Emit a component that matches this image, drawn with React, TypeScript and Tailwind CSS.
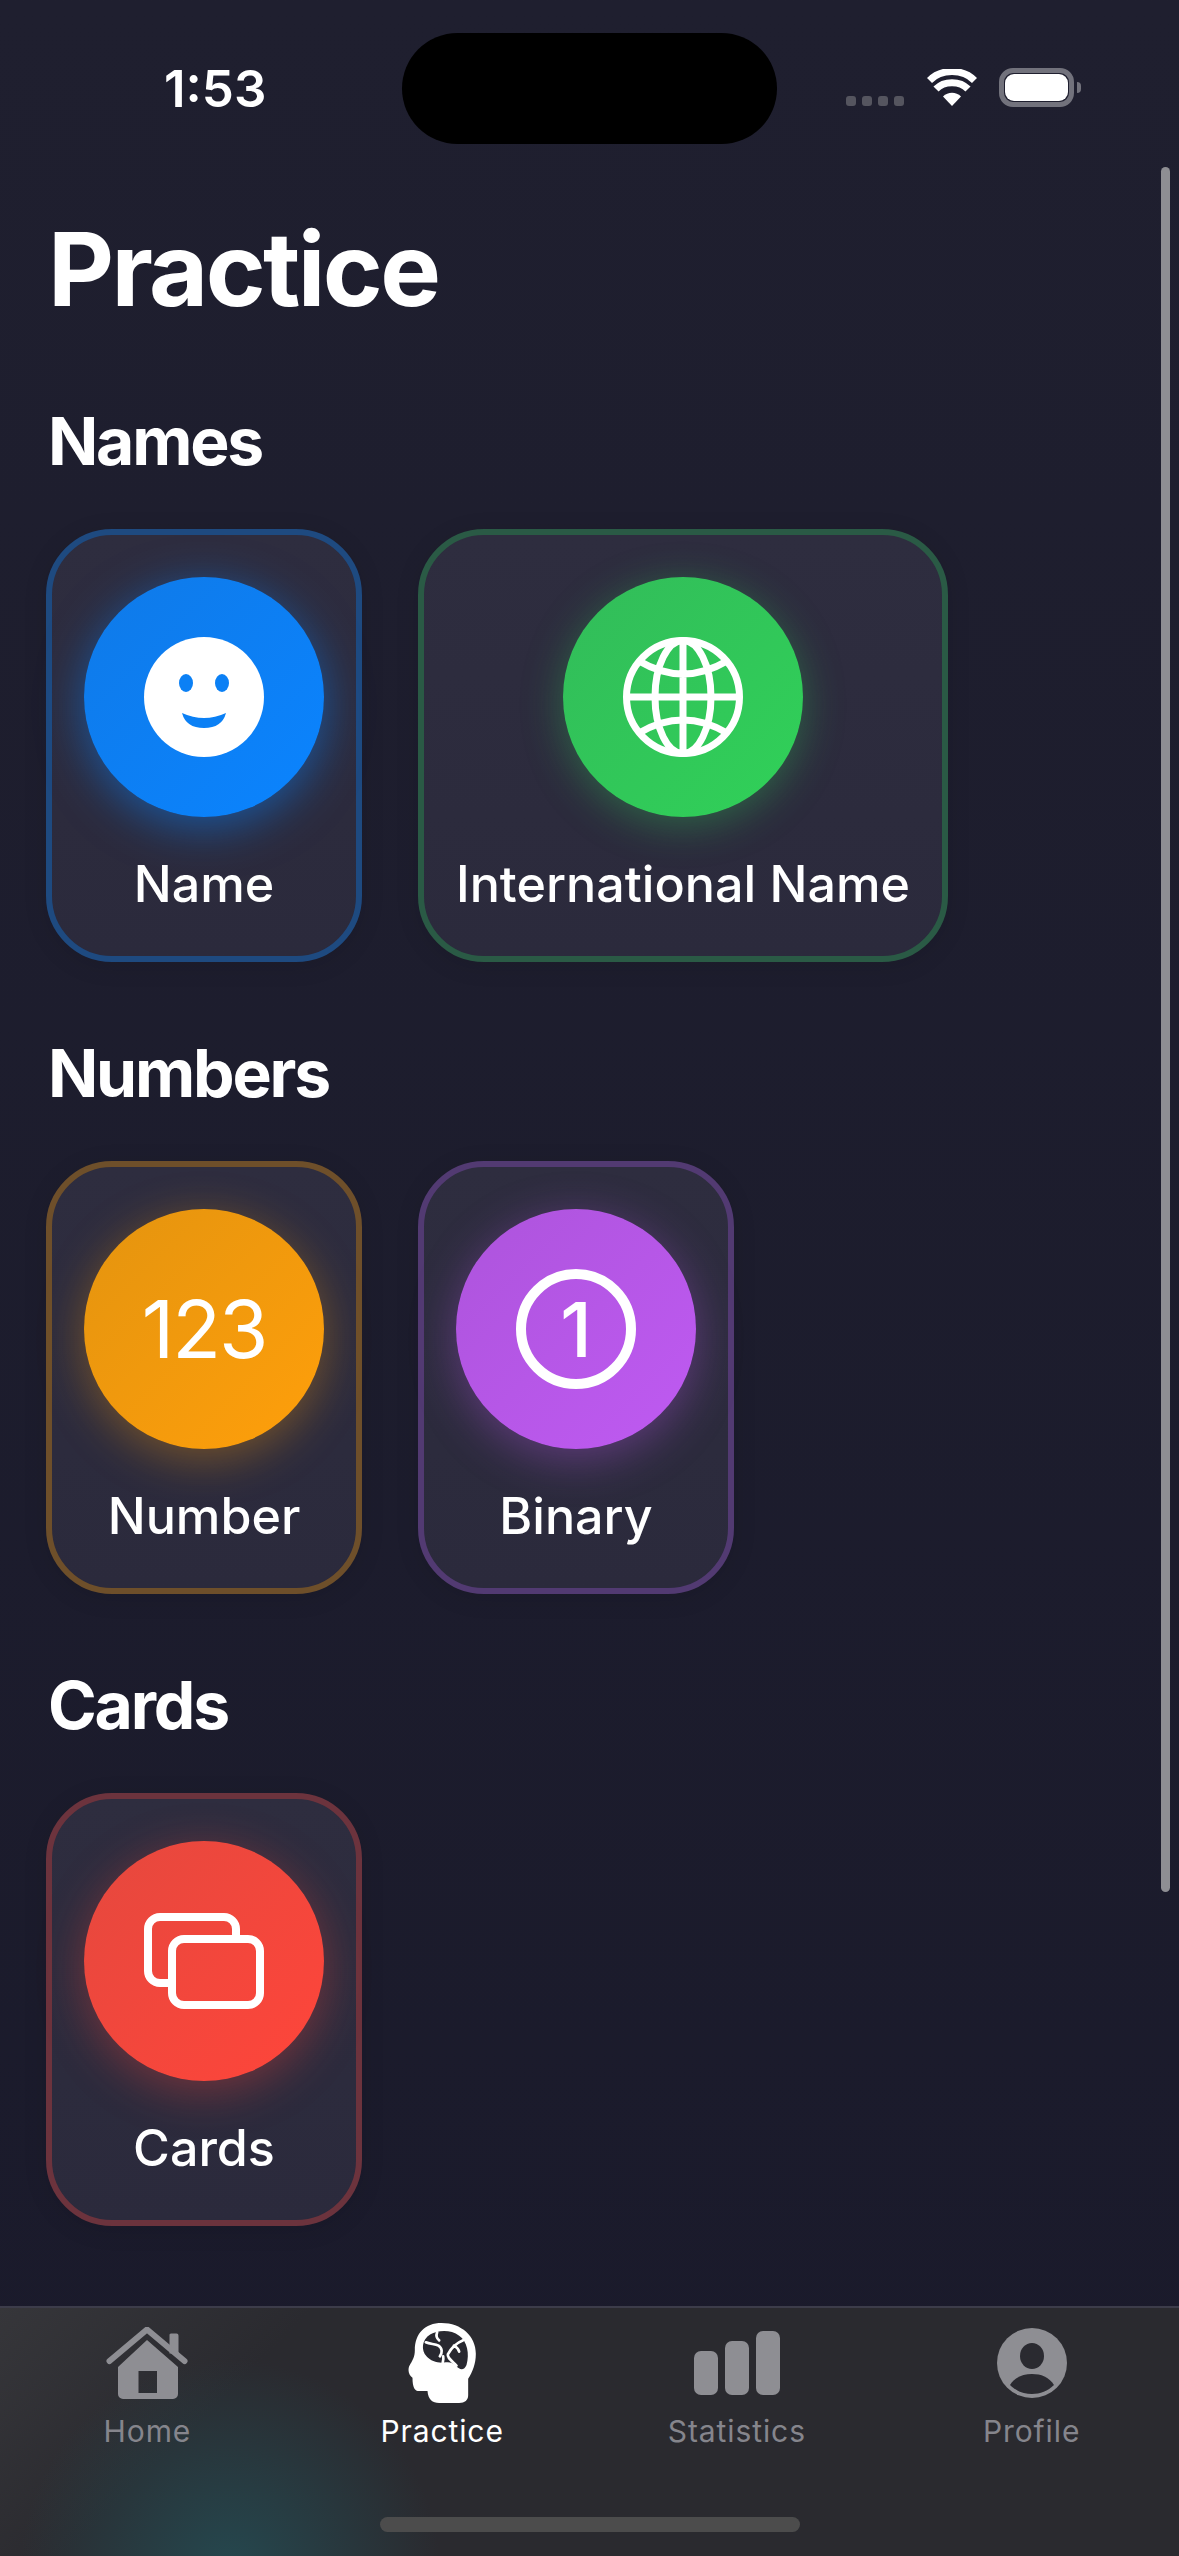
import type { ReactNode } from "react";

const FONT = "font-['Inter','Liberation_Sans',sans-serif]";

const SmileIcon = () => (
  <svg width="120" height="120" viewBox="0 0 120 120">
    <circle cx="60" cy="60" r="60" fill="#fff" />
    <ellipse cx="42" cy="46" rx="7" ry="9" fill="#0b80f5" />
    <ellipse cx="78" cy="46" rx="7" ry="9" fill="#0b80f5" />
    <path d="M38 76 Q60 86 82 76 Q78 91 60 91 Q42 91 38 76Z" fill="#0b80f5" />
  </svg>
);

const GlobeIcon = () => (
  <svg width="120" height="120" viewBox="0 0 120 120" fill="none" stroke="#fff" strokeWidth="7">
    <circle cx="60" cy="60" r="56.5" />
    <ellipse cx="60" cy="60" rx="28" ry="56.5" />
    <path d="M60 3V117M3 60H117M16 24Q60 50 104 24M16 96Q60 70 104 96" />
  </svg>
);

const CardsIcon = () => (
  <svg width="120" height="96" viewBox="0 0 120 96" fill="none" stroke="#fff" strokeWidth="8">
    <path d="M24 70H16A12 12 0 0 1 4 58V16A12 12 0 0 1 16 4H80A12 12 0 0 1 92 16V22" />
    <rect x="28" y="26" width="88" height="66" rx="12" />
  </svg>
);

const BinaryIcon = () => (
  <div className="flex h-[120px] w-[120px] items-center justify-center rounded-full border-[10px] border-white">
    <span className="text-[76px] leading-none font-medium text-white">1</span>
  </div>
);

const HomeIcon = () => (
  <svg width="82" height="72" viewBox="0 0 82 72" fill="#8e8e93">
    <path d="M63.5 7.5a2 2 0 0 1 2-1h5a2 2 0 0 1 2 2v18h-9z" />
    <path d="M41 13 72 40v27a5 5 0 0 1-5 5H17a5 5 0 0 1-5-5V40zM32.5 44v22h18.5V44z" fillRule="evenodd" />
    <path d="M3.5 34 41 2.5 78.5 34" fill="none" stroke="#8e8e93" strokeWidth="6" strokeLinecap="round" strokeLinejoin="round" />
  </svg>
);

const BrainHeadIcon = () => (
  <svg width="68" height="80" viewBox="145 68 203 240">
    <path
      d="M245 68C305 68 348 108 348 160C348 190 338 215 325 235V285C325 300 315 308 298 308H238C218 308 205 298 203 272H178C165 272 158 262 158 232C148 225 143 212 148 198C158 180 165 170 165 150C165 100 195 68 245 68Z"
      fill="#fff"
    />
    <path
      d="M212 102C232 90 272 86 298 106C322 122 330 160 320 194C314 210 300 210 290 198C280 188 270 184 258 186C238 190 214 184 200 168C184 152 184 118 212 102Z"
      fill="#282830"
    />
    <path
      d="M198 126C212 132 226 130 236 136C248 144 248 158 240 168M232 96C228 106 230 114 238 120M250 168C252 176 250 182 248 190M310 120C290 128 274 144 264 162C262 172 274 180 290 196M282 136C290 140 296 146 298 154"
      fill="none"
      stroke="#fff"
      strokeWidth="8"
      strokeLinecap="round"
    />
  </svg>
);

const StatsIcon = () => (
  <div className="flex items-end gap-[7px]">
    <div className="h-[44px] w-[24px] rounded-[7px] bg-[#8e8e93]" />
    <div className="h-[54px] w-[24px] rounded-[7px] bg-[#8e8e93]" />
    <div className="h-[64px] w-[24px] rounded-[7px] bg-[#8e8e93]" />
  </div>
);

const ProfileIcon = () => (
  <svg width="70" height="70" viewBox="0 0 70 70">
    <circle cx="35" cy="35" r="35" fill="#8e8e93" />
    <ellipse cx="35" cy="28" rx="12" ry="13" fill="#2a2a30" />
    <path d="M13 57C18 49 26 46 35 46C44 46 52 49 57 57C51 63 43 66 35 66C27 66 19 63 13 57Z" fill="#2a2a30" />
  </svg>
);

interface TileProps {
  label: string;
  frame: string;
  disc: string;
  children: ReactNode;
}

const Tile = ({ label, frame, disc, children }: TileProps) => (
  <div
    className={`flex flex-col items-center rounded-[66px] border-[6px] bg-gradient-to-b from-[#2e2d3f] to-[#2b2a3c] px-[32px] pt-[42px] pb-[43px] shadow-[0_4px_24px_rgba(0,0,0,0.1)] ${frame}`}
  >
    <div className={`flex h-[240px] w-[240px] items-center justify-center rounded-full bg-gradient-to-br ${disc}`}>
      {children}
    </div>
    <span className="mt-[38px] text-[50.2px] leading-[58px] font-medium whitespace-nowrap text-white">{label}</span>
  </div>
);

const Section = ({ title, children }: { title: string; children: ReactNode }) => (
  <section className="mb-[71px]">
    <h2 className="mb-[48px] pl-[2px] text-[66px] leading-[80px] font-bold tracking-[-2.2px] text-white">{title}</h2>
    <div className="flex gap-[56px]">{children}</div>
  </section>
);

const tabs = [
  { label: "Home", icon: <HomeIcon />, active: false },
  { label: "Practice", icon: <BrainHeadIcon />, active: true },
  { label: "Statistics", icon: <StatsIcon />, active: false },
  { label: "Profile", icon: <ProfileIcon />, active: false },
];

export default function App() {
  return (
    <div className={`relative flex h-[2556px] w-[1179px] flex-col overflow-hidden bg-gradient-to-b from-[#1f1f2f] to-[#1a1a2b] ${FONT}`}>
      {/* status bar */}
      <header className="flex h-[207px] shrink-0 items-start pt-[33px]">
        <span className="mt-[25px] ml-[164px] w-[238px] text-[51px] leading-[62px] font-semibold text-white">1:53</span>
        <div className="h-[111px] w-[375px] rounded-full bg-black" />
        <div className="mt-[35px] ml-[69px] flex gap-[6px] pt-[28px]">
          <span className="h-[10px] w-[10px] rounded-[3px] bg-[#55555f]" />
          <span className="h-[10px] w-[10px] rounded-[3px] bg-[#55555f]" />
          <span className="h-[10px] w-[10px] rounded-[3px] bg-[#55555f]" />
          <span className="h-[10px] w-[10px] rounded-[3px] bg-[#55555f]" />
        </div>
        <svg className="mt-[36px] ml-[23px]" width="50" height="37" viewBox="0 0 50 37" fill="none">
          <path d="M25 37 16 27.5C21 22.5 29 22.5 34 27.5Z" fill="#fff" />
          <path d="M9 20C17 11.5 33 11.5 41 20" stroke="#fff" strokeWidth="7" />
          <path d="M2.5 11.5C14 -0.5 36 -0.5 47.5 11.5" stroke="#fff" strokeWidth="7" />
        </svg>
        <div className="mt-[35px] ml-[22px] flex items-center">
          <div className="h-[39px] w-[75px] rounded-[14px] border-[5px] border-[#72727c] p-px">
            <div className="h-full w-full rounded-[9px] bg-white" />
          </div>
          <div className="ml-[3px] h-[11px] w-[4px] rounded-r-full bg-[#72727c]" />
        </div>
      </header>

      {/* scroll indicator */}
      <div className="absolute top-[167px] right-[9px] h-[1725px] w-[9px] rounded-full bg-[#8e8e93]" />

      <main className="flex-1 pl-[46px]">
        <h1 className="mb-[70px] pl-[2px] text-[102px] leading-[124px] font-bold tracking-[-2.6px] text-white">Practice</h1>
        <Section title="Names">
          <Tile
            label="Name"
            frame="border-[#1e4a80]"
            disc="from-[#0f7ae8] to-[#0a84ff] shadow-[0_10px_45px_rgba(10,132,255,0.5)]"
          >
            <SmileIcon />
          </Tile>
          <Tile
            label="International Name"
            frame="border-[#2a5a45]"
            disc="from-[#32bc5a] to-[#30d158] shadow-[0_8px_40px_rgba(48,209,88,0.35)]"
          >
            <GlobeIcon />
          </Tile>
        </Section>
        <Section title="Numbers">
          <Tile
            label="Number"
            frame="border-[#6e4f2a]"
            disc="from-[#e4940f] to-[#ff9f0a] shadow-[0_10px_45px_rgba(255,159,10,0.35)]"
          >
            <span className="text-[80px] leading-none font-normal tracking-[-2px] text-white">123</span>
          </Tile>
          <Tile
            label="Binary"
            frame="border-[#523a72]"
            disc="from-[#ad54dc] to-[#bf5af2] shadow-[0_10px_45px_rgba(191,90,242,0.35)]"
          >
            <BinaryIcon />
          </Tile>
        </Section>
        <Section title="Cards">
          <Tile
            label="Cards"
            frame="border-[#6c333d]"
            disc="from-[#e5483e] to-[#ff453a] shadow-[0_10px_45px_rgba(255,69,58,0.35)]"
          >
            <CardsIcon />
          </Tile>
        </Section>
      </main>

      {/* tab bar */}
      <nav className="flex h-[250px] shrink-0 flex-col border-t-2 border-[#3c3c4a] bg-[#2a2a2f] bg-[radial-gradient(circle_at_230px_262px,#25484f_0%,rgba(37,72,79,0)_210px),linear-gradient(135deg,#36363a_0%,rgba(42,42,47,0)_22%)]">
        <div className="grid grid-cols-4 pt-[15px]">
          {tabs.map((tab) => (
            <div key={tab.label} className="flex flex-col items-center">
              <div className="flex h-[80px] items-center justify-center">{tab.icon}</div>
              <span
                className={`mt-[10px] text-[30px] leading-[36px] font-normal tracking-[0.9px] ${
                  tab.active ? "text-white" : "text-[#85858c]"
                }`}
              >
                {tab.label}
              </span>
            </div>
          ))}
        </div>
        <div className="mx-auto mt-auto mb-[24px] h-[15px] w-[420px] rounded-full bg-[#4c4c4c]" />
      </nav>
    </div>
  );
}
